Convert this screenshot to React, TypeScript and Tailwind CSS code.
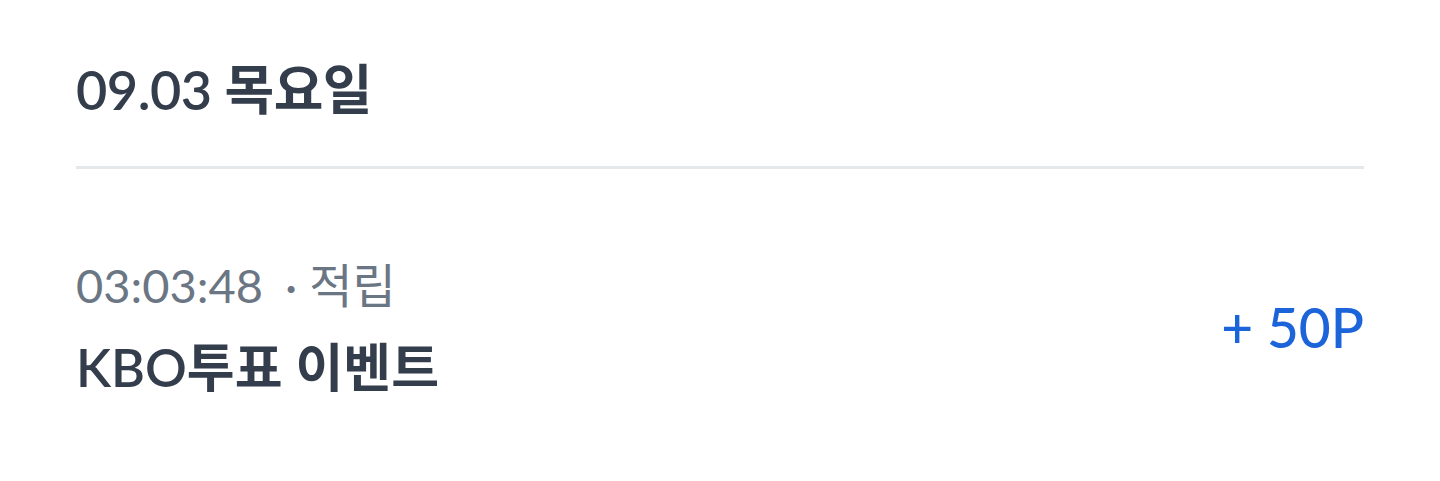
export default function App() {
  return (
    <div
      className="w-[1440px] h-[481px] bg-white px-[76px] pt-[54px]"
      style={{ fontFamily: 'Lato, "Noto Sans CJK KR", sans-serif' }}
    >
      <h2 className="text-[54px] leading-[72px] font-semibold text-[#333d4b] tracking-[-0.5px]">
        09.03 목요일
      </h2>
      <div className="mt-[40px] h-[3px] bg-[#e5e8eb]" />
      <div className="mt-[86px] flex items-center justify-between">
        <div className="flex flex-col">
          <div className="text-[47px] leading-[60px] text-[#6b7684] flex items-center">
            <span>03:03:48</span>
            <span className="ml-[22px]">· 적립</span>
          </div>
          <div className="mt-[20px] text-[52px] leading-[64px] font-semibold text-[#333d4b]">
            KBO투표 이벤트
          </div>
        </div>
        <div className="text-[55px] leading-[64px] font-medium text-[#1b64da]">+ 50P</div>
      </div>
    </div>
  );
}
